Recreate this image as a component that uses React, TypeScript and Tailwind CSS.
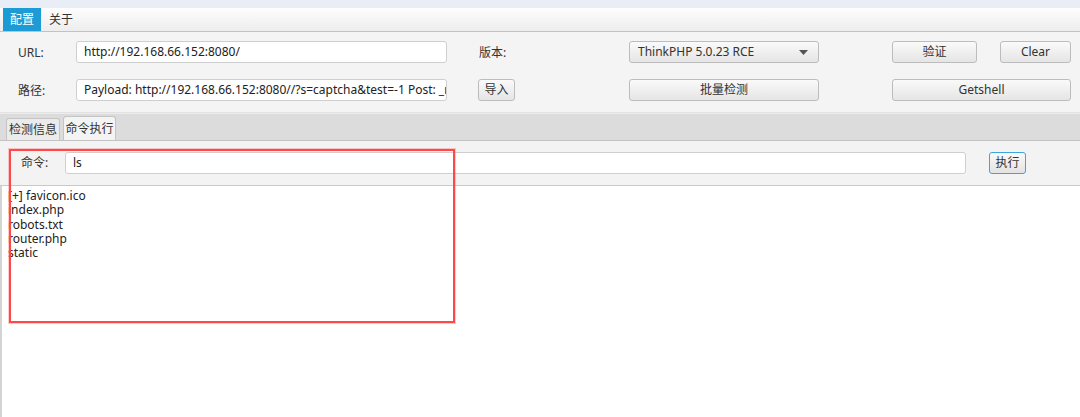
import React from "react";

const Btn = ({ children, className = "" }: { children: React.ReactNode; className?: string }) => (
  <div
    className={
      "flex items-center justify-center h-[22px] rounded-[3px] border border-[#bcbcbc] bg-linear-to-b from-[#fafafa] to-[#e5e5e5] text-[12px] text-[#333] shrink-0 " +
      className
    }
  >
    {children}
  </div>
);

const Input = ({ value, className = "" }: { value: string; className?: string }) => (
  <div
    className={
      "flex items-center h-[22px] rounded-[3px] border border-[#cfcfcf] bg-white pl-[7px] overflow-hidden whitespace-nowrap text-[12px] text-[#222] shrink-0 " +
      className
    }
  >
    {value}
  </div>
);

export default function App() {
  return (
    <div className="relative w-[1080px] h-[417px] overflow-hidden bg-white font-['Noto_Sans','Noto_Sans_CJK_SC',sans-serif] text-[#333]">
      {/* top strip */}
      <div className="h-[8px] bg-[#e9eef6]" />

      {/* main tab bar */}
      <div className="h-[24px] flex items-stretch bg-linear-to-b from-[#fdfdfd] to-[#ededed] border-b border-[#c2c2c2] pl-[3px]">
        <div className="w-[38px] bg-[#1c9bd5] text-white text-[12px] flex items-center justify-center pt-[1px]">配置</div>
        <div className="w-[40px] text-[12px] text-[#333] flex items-center justify-center pt-[1px]">关于</div>
      </div>

      {/* config panel */}
      <div className="bg-[#f4f4f4] pt-[9px] pb-[11px] pl-[18px] flex flex-col gap-[16px] border-b border-[#e2e2e2]">
        <div className="flex items-center h-[22px]">
          <div className="w-[58px] text-[12px] pt-[1px]">URL:</div>
          <Input value="http://192.168.66.152:8080/" className="w-[371px]" />
          <div className="w-[150px] ml-[32px] text-[12px] pt-[1px]">版本:</div>
          <Btn className="w-[190px] !justify-between px-[8px]">
            <span>ThinkPHP 5.0.23 RCE</span>
            <svg width="9" height="5" viewBox="0 0 9 5" className="mr-[2px]">
              <path d="M0 0h9L4.5 5z" fill="#555" />
            </svg>
          </Btn>
          <Btn className="w-[85px] ml-[73px]">验证</Btn>
          <Btn className="w-[71px] ml-[23px]">Clear</Btn>
        </div>
        <div className="flex items-center h-[22px]">
          <div className="w-[58px] text-[12px] pt-[1px]">路径:</div>
          <Input value="Payload: http://192.168.66.152:8080//?s=captcha&test=-1 Post: _r" className="w-[371px]" />
          <Btn className="w-[37px] ml-[31px]">导入</Btn>
          <Btn className="w-[190px] ml-[114px]">批量检测</Btn>
          <Btn className="w-[179px] ml-[73px]">Getshell</Btn>
        </div>
      </div>

      {/* sub tab bar */}
      <div className="h-[28px] bg-[#dcdcdc] border-t border-[#ececec] border-b border-b-[#c3c3c3] flex items-end pl-[6px] gap-[3px]">
        <div className="h-[22px] w-[54px] rounded-t-[3px] border border-b-0 border-[#c4c4c4] bg-[#ebebeb] text-[12px] flex items-center justify-center">
          检测信息
        </div>
        <div className="h-[24px] w-[53px] rounded-t-[3px] border border-b-0 border-[#c4c4c4] bg-[#f4f4f4] text-[12px] flex items-center justify-center">
          命令执行
        </div>
      </div>

      {/* command row */}
      <div className="h-[45px] bg-[#f3f3f3] border-b border-[#c9c9c9] flex items-center pl-[21px]">
        <div className="w-[44px] text-[12px]">命令:</div>
        <Input value="ls" className="w-[901px]" />
        <div className="ml-[23px] w-[37px] h-[22px] rounded-[3px] border-[1.5px] border-[#3aa7df] bg-linear-to-b from-[#fafafa] to-[#e3e3e3] text-[12px] flex items-center justify-center">
          执行
        </div>
      </div>

      {/* output */}
      <div className="h-[232px] bg-white border-l-2 border-[#d4d4d4] pl-[6px] pt-[3px] text-[12px] leading-[14.25px] text-[#222] whitespace-pre">
        {"[+] favicon.ico\nindex.php\nrobots.txt\nrouter.php\nstatic"}
      </div>

      {/* red annotation box */}
      <div className="absolute left-[9px] top-[149px] w-[446px] h-[174px] border-2 border-[#ff4848] shadow-[0_0_0_1px_rgba(255,90,90,0.3)] pointer-events-none" />
    </div>
  );
}
